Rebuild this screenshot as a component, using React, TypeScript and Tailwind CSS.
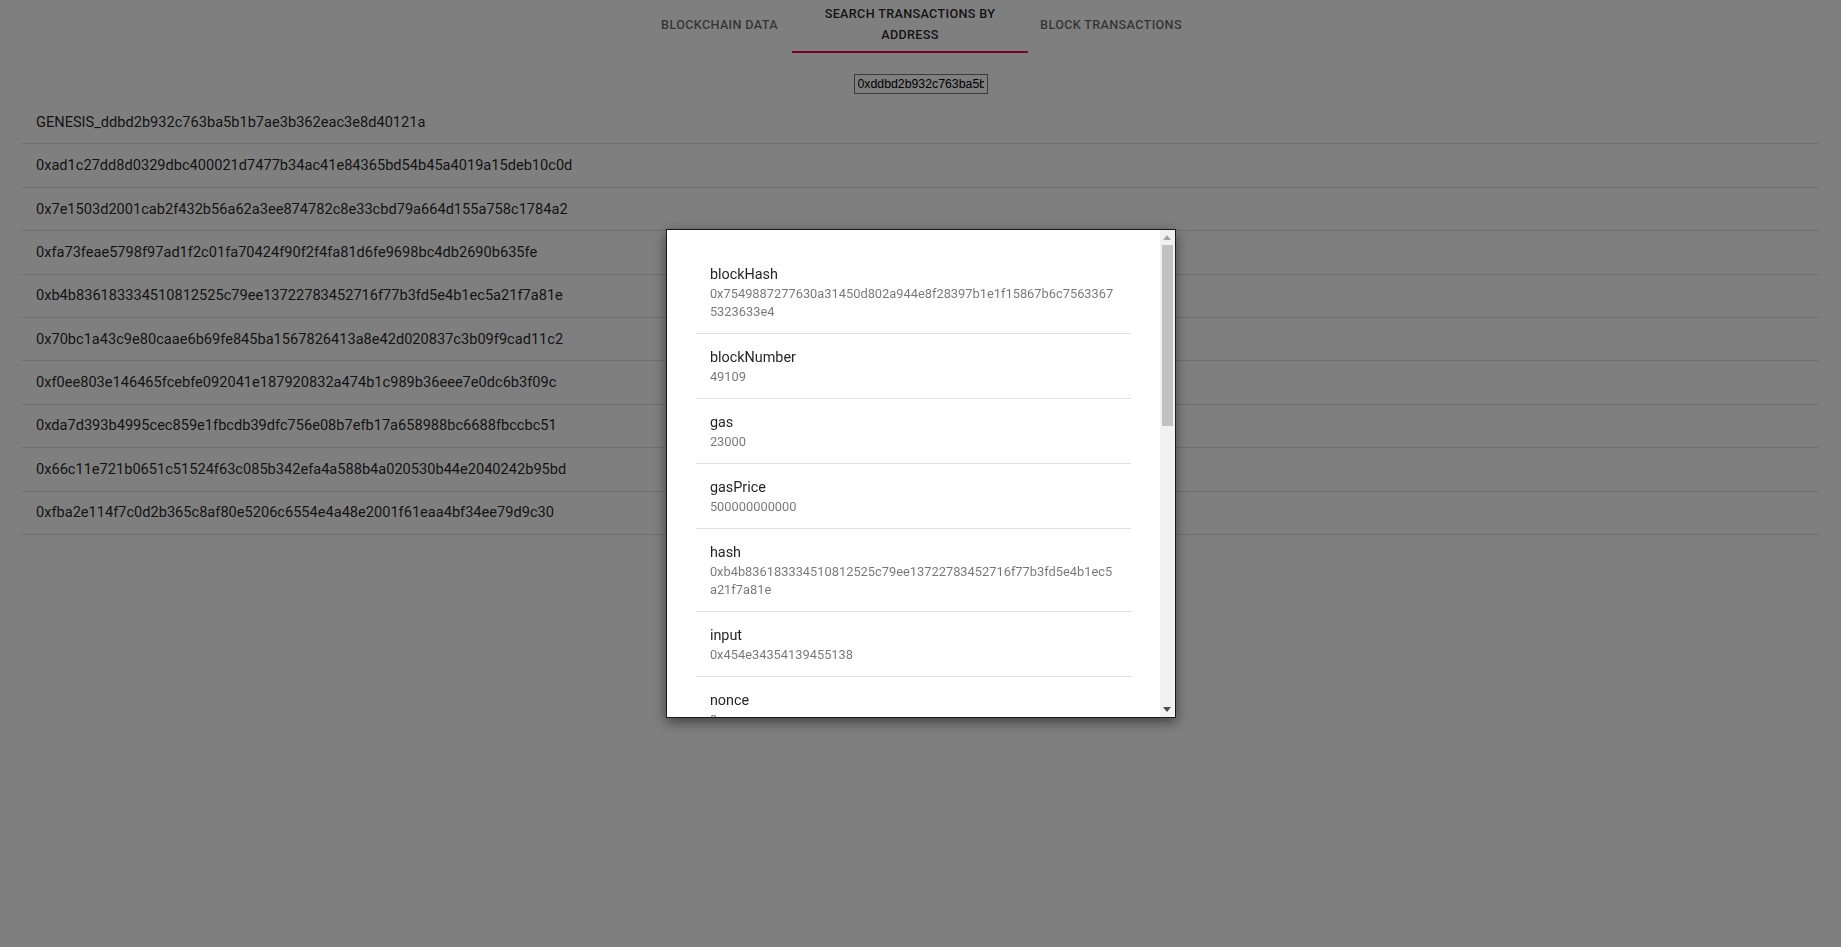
const blocks = [
  "GENESIS_ddbd2b932c763ba5b1b7ae3b362eac3e8d40121a",
  "0xad1c27dd8d0329dbc400021d7477b34ac41e84365bd54b45a4019a15deb10c0d",
  "0x7e1503d2001cab2f432b56a62a3ee874782c8e33cbd79a664d155a758c1784a2",
  "0xfa73feae5798f97ad1f2c01fa70424f90f2f4fa81d6fe9698bc4db2690b635fe",
  "0xb4b836183334510812525c79ee13722783452716f77b3fd5e4b1ec5a21f7a81e",
  "0x70bc1a43c9e80caae6b69fe845ba1567826413a8e42d020837c3b09f9cad11c2",
  "0xf0ee803e146465fcebfe092041e187920832a474b1c989b36eee7e0dc6b3f09c",
  "0xda7d393b4995cec859e1fbcdb39dfc756e08b7efb17a658988bc6688fbccbc51",
  "0x66c11e721b0651c51524f63c085b342efa4a588b4a020530b44e2040242b95bd",
  "0xfba2e114f7c0d2b365c8af80e5206c6554e4a48e2001f61eaa4bf34ee79d9c30",
];

const details = [
  { label: "blockHash", value: "0x7549887277630a31450d802a944e8f28397b1e1f15867b6c75633675323633e4" },
  { label: "blockNumber", value: "49109" },
  { label: "gas", value: "23000" },
  { label: "gasPrice", value: "500000000000" },
  { label: "hash", value: "0xb4b836183334510812525c79ee13722783452716f77b3fd5e4b1ec5a21f7a81e" },
  { label: "input", value: "0x454e34354139455138" },
  { label: "nonce", value: "8" },
  { label: "to", value: "0x0000000000000000000000000000000000000000" },
];

const App = () => {
  return (
    <div className="min-h-screen bg-white font-[Roboto,sans-serif]">

      {/* Tabs */}
      <div className="flex justify-center h-[53px]">
        <div className="w-[145px] flex items-center justify-center pb-[4px] text-[12.6px] leading-[21px] font-medium tracking-[0.36px] text-[rgba(0,0,0,0.6)] uppercase">
          Blockchain Data
        </div>
        <div className="w-[236px] relative flex items-center justify-center pb-[5px] px-[10.8px] text-center text-[12.6px] leading-[21px] font-medium tracking-[0.36px] text-[rgba(0,0,0,0.87)] uppercase">
          Search Transactions by Address
          <span className="absolute left-0 right-0 bottom-0 h-[2px] bg-[#f50057]"></span>
        </div>
        <div className="w-[166px] flex items-center justify-center pb-[4px] text-[12.6px] leading-[21px] font-medium tracking-[0.36px] text-[rgba(0,0,0,0.6)] uppercase">
          Block Transactions
        </div>
      </div>

      {/* Address search */}
      <div className="flex justify-center mt-[21px]">
        <input
          readOnly
          value="0xddbd2b932c763ba5b1b7ae3b362eac3e8d40121a"
          className="w-[134px] h-[20px] border border-[#767676] px-[3px] text-[12.3px] font-['Liberation_Sans',sans-serif] text-black outline-none"
        />
      </div>

      {/* Block list */}
      <div className="mx-[21.6px] pt-[7px]">
        {blocks.map((b) => (
          <div key={b} className="h-[43.4px] flex items-center px-[14.4px] pt-[1px] border-b border-[#e0e0e0] text-[14.6px] text-[rgba(0,0,0,0.87)]">
            {b}
          </div>
        ))}
      </div>

      {/* Overlay + modal */}
      <div className="fixed inset-0 bg-black/50 flex items-center justify-center">
        <div className="w-[510px] h-[489px] bg-white border border-[#1a1a1a] shadow-[0_4px_12px_rgba(0,0,0,0.5)] flex overflow-hidden">
          <div className="flex-1 overflow-hidden px-[29px] pt-[21.5px]">
            {details.map((d) => (
              <div key={d.label} className="px-[14.4px] py-[12.2px] border-b border-[#e0e0e0]">
                <div className="text-[14.4px] leading-[21.6px] text-[rgba(0,0,0,0.87)]">{d.label}</div>
                <div className="text-[12.85px] leading-[18px] text-[rgba(0,0,0,0.54)] break-all">{d.value}</div>
              </div>
            ))}
          </div>

          {/* Scrollbar */}
          <div className="w-[15px] bg-[#f1f1f1] flex flex-col">
            <div className="h-[15px] flex items-center justify-center">
              <svg width="8" height="5" viewBox="0 0 8 5"><path d="M0 5 L4 0 L8 5 Z" fill="#a3a3a3" /></svg>
            </div>
            <div className="mx-[2px] h-[181px] bg-[#c1c1c1]"></div>
            <div className="flex-1"></div>
            <div className="h-[15px] flex items-center justify-center">
              <svg width="8" height="5" viewBox="0 0 8 5"><path d="M0 0 L8 0 L4 5 Z" fill="#505050" /></svg>
            </div>
          </div>
        </div>
      </div>

    </div>
  );
};

export default App;
